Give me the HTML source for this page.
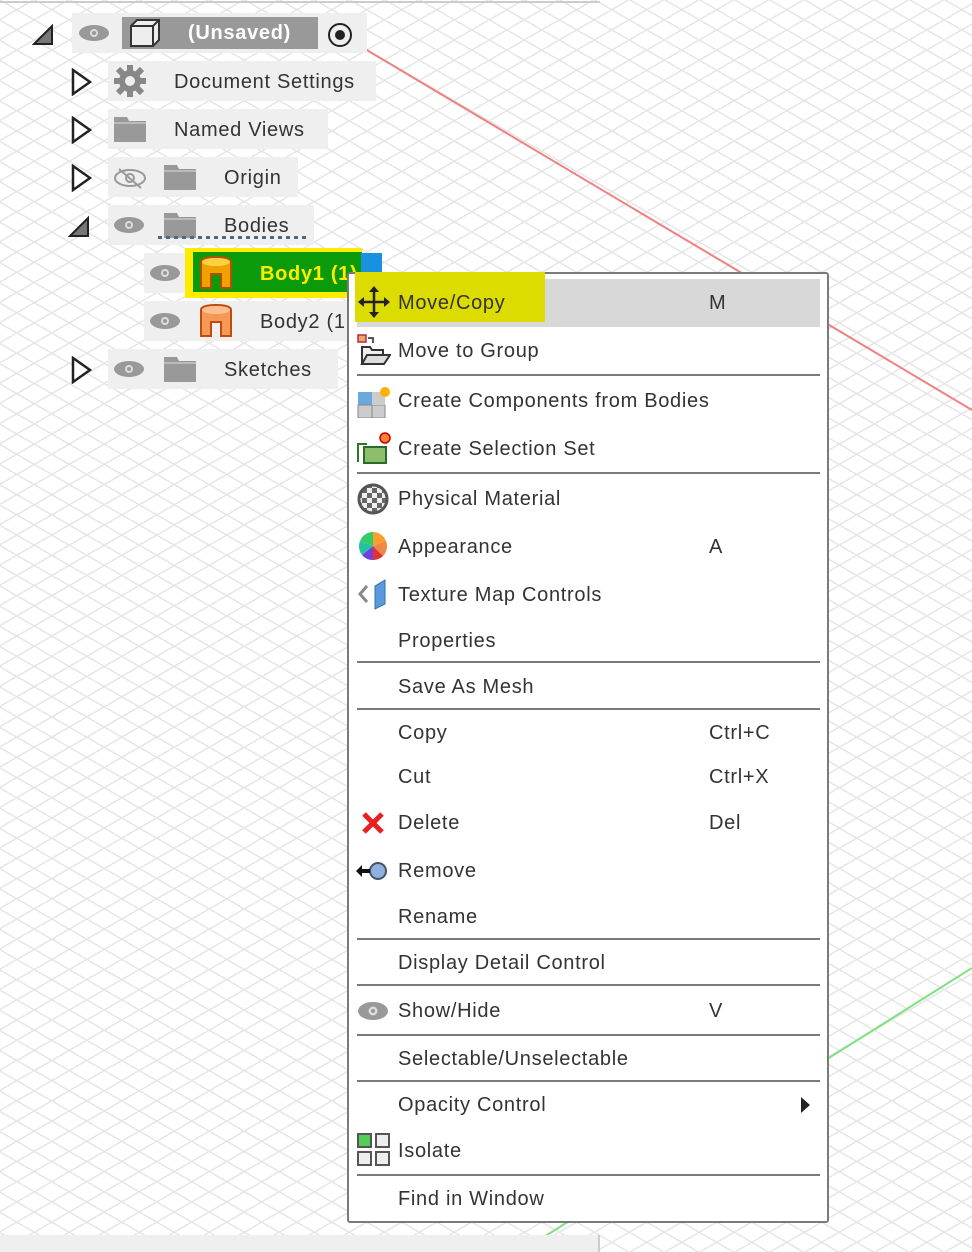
<!DOCTYPE html>
<html><head><meta charset="utf-8"><style>
*{margin:0;padding:0;box-sizing:border-box}
body{width:972px;height:1252px;overflow:hidden;position:relative;background:#fff;font-family:"Liberation Sans",sans-serif;color:#333;letter-spacing:0.7px}
.bg{position:absolute;inset:0;background:
repeating-linear-gradient(30deg,transparent 0 16px,#e6e6e6 16px 17.5px),
repeating-linear-gradient(150deg,transparent 0 16px,#e6e6e6 16px 17.5px);}
.t{position:absolute;font-size:20px;line-height:24px;white-space:nowrap}
.rb{position:absolute;background:#efefef;height:40px}
.menu{position:absolute;left:347px;top:272px;width:482px;height:951px;background:#fff;border:2px solid #7a7a7a;border-radius:3px}
.sep{position:absolute;left:8px;width:463px;height:2px;background:#7a7a7a}
.mi{position:absolute;left:49px;font-size:20px;line-height:24px;color:#333;white-space:nowrap}
.sc{position:absolute;left:360px;font-size:20px;line-height:24px;color:#333}
.ic{position:absolute}
</style></head><body>
<div class="bg"></div>
<svg style="position:absolute;left:0;top:0" width="972" height="1252">
<line x1="350" y1="40" x2="972" y2="410" stroke="#f08080" stroke-width="2"/>
<line x1="520" y1="1252" x2="972" y2="968" stroke="#80e080" stroke-width="2"/>
<line x1="0" y1="2" x2="600" y2="2" stroke="#ccc" stroke-width="2"/>
</svg>
<!-- tree -->
<div class="rb" style="left:72px;top:13px;width:295px"></div>
<svg class="ic" style="left:32px;top:22px" width="24" height="24"><path d="M2 22L20 4V22Z" fill="#777" stroke="#222" stroke-width="2"/></svg>
<svg class="ic" style="left:78px;top:23px" width="32" height="20"><ellipse cx="16" cy="10" rx="15" ry="8" fill="#999"/><circle cx="16" cy="10" r="4" fill="#ddd"/><circle cx="16" cy="10" r="2" fill="#999"/></svg>
<div style="position:absolute;left:122px;top:17px;width:196px;height:32px;background:#999"></div>
<svg class="ic" style="left:127px;top:18px" width="34" height="30"><path d="M4 8L10 2H32V22L26 28H4Z" fill="#eee" stroke="#333" stroke-width="2"/><path d="M4 8H26V28M26 8L32 2" fill="none" stroke="#333" stroke-width="2"/></svg>
<div class="t" style="left:188px;top:21px;color:#fff;font-weight:bold">(Unsaved)</div>
<svg class="ic" style="left:326px;top:21px" width="28" height="28"><circle cx="14" cy="14" r="11" fill="none" stroke="#222" stroke-width="2"/><circle cx="14" cy="14" r="5" fill="#222"/></svg>

<div class="rb" style="left:108px;top:61px;width:268px"></div>
<svg class="ic" style="left:70px;top:68px" width="24" height="28"><path d="M3 2L20 14L3 26Z" fill="#fff" stroke="#222" stroke-width="2.5"/></svg>
<svg class="ic" style="left:113px;top:64px" width="34" height="34"><circle cx="17" cy="17" r="11" fill="#888"/><g stroke="#888" stroke-width="6"><line x1="17" y1="1" x2="17" y2="33"/><line x1="1" y1="17" x2="33" y2="17"/><line x1="5" y1="5" x2="29" y2="29"/><line x1="29" y1="5" x2="5" y2="29"/></g><circle cx="17" cy="17" r="5" fill="#efefef"/></svg>
<div class="t" style="left:174px;top:70px">Document Settings</div>

<div class="rb" style="left:108px;top:109px;width:220px"></div>
<svg class="ic" style="left:70px;top:116px" width="24" height="28"><path d="M3 2L20 14L3 26Z" fill="#fff" stroke="#222" stroke-width="2.5"/></svg>
<svg class="ic" style="left:113px;top:115px" width="34" height="28"><path d="M1 2H14L16 6H33V27H1Z" fill="#999"/><rect x="1" y="7" width="32" height="2" fill="#bbb"/></svg>
<div class="t" style="left:174px;top:118px">Named Views</div>

<div class="rb" style="left:108px;top:157px;width:190px"></div>
<svg class="ic" style="left:70px;top:164px" width="24" height="28"><path d="M3 2L20 14L3 26Z" fill="#fff" stroke="#222" stroke-width="2.5"/></svg>
<svg class="ic" style="left:113px;top:167px" width="34" height="22"><ellipse cx="17" cy="11" rx="15" ry="8" fill="none" stroke="#999" stroke-width="2"/><circle cx="17" cy="11" r="4" fill="none" stroke="#999" stroke-width="2"/><line x1="6" y1="2" x2="28" y2="21" stroke="#999" stroke-width="2"/></svg>
<svg class="ic" style="left:163px;top:163px" width="34" height="28"><path d="M1 2H14L16 6H33V27H1Z" fill="#999"/><rect x="1" y="7" width="32" height="2" fill="#bbb"/></svg>
<div class="t" style="left:224px;top:166px">Origin</div>

<div class="rb" style="left:108px;top:205px;width:206px"></div>
<svg class="ic" style="left:68px;top:214px" width="24" height="24"><path d="M2 22L20 4V22Z" fill="#777" stroke="#222" stroke-width="2"/></svg>
<svg class="ic" style="left:113px;top:215px" width="32" height="20"><ellipse cx="16" cy="10" rx="15" ry="8" fill="#999"/><circle cx="16" cy="10" r="4" fill="#ddd"/><circle cx="16" cy="10" r="2" fill="#999"/></svg>
<svg class="ic" style="left:163px;top:211px" width="34" height="28"><path d="M1 2H14L16 6H33V27H1Z" fill="#999"/><rect x="1" y="7" width="32" height="2" fill="#bbb"/></svg>
<div class="t" style="left:224px;top:214px">Bodies</div>
<div style="position:absolute;left:158px;top:236px;width:152px;height:3px;background:repeating-linear-gradient(90deg,#567 0 4px,transparent 4px 8px)"></div>

<div class="rb" style="left:144px;top:301px;width:210px"></div>
<div style="position:absolute;left:144px;top:253px;width:42px;height:40px;background:#efefef"></div>
<svg class="ic" style="left:149px;top:263px" width="32" height="20"><ellipse cx="16" cy="10" rx="15" ry="8" fill="#999"/><circle cx="16" cy="10" r="4" fill="#ddd"/><circle cx="16" cy="10" r="2" fill="#999"/></svg>
<div style="position:absolute;left:185px;top:248px;width:177px;height:50px;background:#ffeb00"></div>
<div style="position:absolute;left:193px;top:252px;width:169px;height:40px;background:#0a9a0a"></div>
<div style="position:absolute;left:361px;top:253px;width:21px;height:22px;background:#1a90e0"></div>
<svg class="ic" style="left:199px;top:256px" width="34" height="34"><path d="M2 6Q2 1 17 1Q32 1 32 6V32H22V18H12V32H2Z" fill="#f0a000" stroke="#b35000" stroke-width="2"/><ellipse cx="17" cy="6" rx="14" ry="4" fill="#ffd040"/></svg>
<div class="t" style="left:260px;top:262px;color:#ffeb00;font-weight:bold">Body1 (1)</div>
<svg class="ic" style="left:149px;top:311px" width="32" height="20"><ellipse cx="16" cy="10" rx="15" ry="8" fill="#999"/><circle cx="16" cy="10" r="4" fill="#ddd"/><circle cx="16" cy="10" r="2" fill="#999"/></svg>
<svg class="ic" style="left:199px;top:304px" width="34" height="34"><path d="M2 6Q2 1 17 1Q32 1 32 6V32H22V18H12V32H2Z" fill="#f59a55" stroke="#c04a10" stroke-width="2"/><ellipse cx="17" cy="6" rx="14" ry="4" fill="#fcc090"/></svg>
<div class="t" style="left:260px;top:310px">Body2 (1</div>

<div class="rb" style="left:108px;top:349px;width:230px"></div>
<svg class="ic" style="left:70px;top:356px" width="24" height="28"><path d="M3 2L20 14L3 26Z" fill="#fff" stroke="#222" stroke-width="2.5"/></svg>
<svg class="ic" style="left:113px;top:359px" width="32" height="20"><ellipse cx="16" cy="10" rx="15" ry="8" fill="#999"/><circle cx="16" cy="10" r="4" fill="#ddd"/><circle cx="16" cy="10" r="2" fill="#999"/></svg>
<svg class="ic" style="left:163px;top:355px" width="34" height="28"><path d="M1 2H14L16 6H33V27H1Z" fill="#999"/><rect x="1" y="7" width="32" height="2" fill="#bbb"/></svg>
<div class="t" style="left:224px;top:358px">Sketches</div>

<!-- bottom panel -->
<div style="position:absolute;left:0;top:1235px;width:600px;height:17px;background:#efefef;border-right:2px solid #ccc"></div>

<!-- menu -->
<div class="menu">
<div style="position:absolute;left:8px;top:5px;width:463px;height:48px;background:#d8d8d8"></div>
<div style="position:absolute;left:6px;top:-2px;width:190px;height:50px;background:#dcdc00"></div>
<div class="mi" style="top:17px">Move/Copy</div><div class="sc" style="top:17px">M</div>
<svg class="ic" style="left:9px;top:12px" width="32" height="32"><g stroke="#222" stroke-width="2.5"><line x1="16" y1="3" x2="16" y2="29"/><line x1="3" y1="16" x2="29" y2="16"/></g><g fill="#222"><path d="M16 0L11 6H21Z"/><path d="M16 32L11 26H21Z"/><path d="M0 16L6 11V21Z"/><path d="M32 16L26 11V21Z"/></g></svg>
<div class="mi" style="top:65px">Move to Group</div>
<svg class="ic" style="left:8px;top:60px" width="34" height="32"><rect x="1" y="1" width="8" height="7" fill="#f4a070" stroke="#a33" stroke-width="1.5"/><path d="M11 4H16V9" fill="none" stroke="#222" stroke-width="1.5"/><path d="M5 30V13H13L15 16H26V30Z" fill="#eee" stroke="#333" stroke-width="2"/><path d="M5 30L10 21H33L27 30Z" fill="#ddd" stroke="#333" stroke-width="2"/></svg>
<div class="sep" style="top:100px"></div>
<div class="mi" style="top:115px">Create Components from Bodies</div>
<svg class="ic" style="left:8px;top:110px" width="34" height="34"><rect x="1" y="8" width="14" height="13" fill="#6aa8e0"/><rect x="1" y="21" width="14" height="13" fill="#ccc" stroke="#888"/><rect x="15" y="21" width="13" height="13" fill="#ccc" stroke="#888"/><rect x="15" y="8" width="13" height="13" fill="#ccc"/><circle cx="28" cy="8" r="5" fill="#ffb000"/></svg>
<div class="mi" style="top:163px">Create Selection Set</div>
<svg class="ic" style="left:8px;top:158px" width="34" height="34"><path d="M1 30V12H10" fill="none" stroke="#2a7a2a" stroke-width="2"/><rect x="7" y="15" width="22" height="16" fill="#8bbd6a" stroke="#2a6a2a" stroke-width="2"/><circle cx="28" cy="6" r="5" fill="#ff8030" stroke="#c00" stroke-width="1.5"/></svg>
<div class="sep" style="top:198px"></div>
<div class="mi" style="top:213px">Physical Material</div>
<svg class="ic" style="left:8px;top:209px" width="32" height="32"><defs><pattern id="ch" width="10" height="10" patternUnits="userSpaceOnUse"><rect width="10" height="10" fill="#eee"/><rect width="5" height="5" fill="#666"/><rect x="5" y="5" width="5" height="5" fill="#666"/></pattern></defs><circle cx="16" cy="16" r="14" fill="url(#ch)" stroke="#555" stroke-width="3"/></svg>
<div class="mi" style="top:261px">Appearance</div><div class="sc" style="top:261px">A</div>
<svg class="ic" style="left:9px;top:257px" width="30" height="30"><path d="M15 15L15 1A14 14 0 0 1 28 10Z" fill="#f7a030"/><path d="M15 15L28 10A14 14 0 0 1 25 25Z" fill="#e84"/><path d="M15 15L25 25A14 14 0 0 1 15 29Z" fill="#d33"/><path d="M15 15L15 29A14 14 0 0 1 4 24Z" fill="#7040e0"/><path d="M15 15L4 24A14 14 0 0 1 2 10Z" fill="#28c0a0"/><path d="M15 15L2 10A14 14 0 0 1 15 1Z" fill="#3c6"/></svg>
<div class="mi" style="top:309px">Texture Map Controls</div>
<svg class="ic" style="left:8px;top:304px" width="32" height="32"><path d="M10 8L3 16L10 24" fill="none" stroke="#888" stroke-width="3"/><path d="M18 8L28 2V26L18 31Z" fill="#5a9ad8" stroke="#3070b0"/></svg>
<div class="mi" style="top:355px">Properties</div>
<div class="sep" style="top:387px"></div>
<div class="mi" style="top:401px">Save As Mesh</div>
<div class="sep" style="top:434px"></div>
<div class="mi" style="top:447px">Copy</div><div class="sc" style="top:447px">Ctrl+C</div>
<div class="mi" style="top:491px">Cut</div><div class="sc" style="top:491px">Ctrl+X</div>
<div class="mi" style="top:537px">Delete</div><div class="sc" style="top:537px">Del</div>
<svg class="ic" style="left:12px;top:537px" width="24" height="24"><path d="M3 3L21 21M21 3L3 21" stroke="#e82020" stroke-width="5"/></svg>
<div class="mi" style="top:585px">Remove</div>
<svg class="ic" style="left:6px;top:585px" width="34" height="24"><circle cx="23" cy="12" r="8" fill="#8fb0e0" stroke="#456" stroke-width="2"/><path d="M1 12L7 6V10H15V14H7V18Z" fill="#111"/></svg>
<div class="mi" style="top:631px">Rename</div>
<div class="sep" style="top:664px"></div>
<div class="mi" style="top:677px">Display Detail Control</div>
<div class="sep" style="top:710px"></div>
<div class="mi" style="top:725px">Show/Hide</div><div class="sc" style="top:725px">V</div>
<svg class="ic" style="left:8px;top:726px" width="32" height="22"><ellipse cx="16" cy="11" rx="15" ry="9" fill="#999"/><circle cx="16" cy="11" r="4.5" fill="#ddd"/><circle cx="16" cy="11" r="2" fill="#999"/></svg>
<div class="sep" style="top:760px"></div>
<div class="mi" style="top:773px">Selectable/Unselectable</div>
<div class="sep" style="top:806px"></div>
<div class="mi" style="top:819px">Opacity Control</div>
<svg class="ic" style="left:451px;top:821px" width="12" height="20"><path d="M1 2L10 10L1 18Z" fill="#222"/></svg>
<div class="mi" style="top:865px">Isolate</div>
<svg class="ic" style="left:8px;top:859px" width="34" height="34"><rect x="1" y="1" width="13" height="13" fill="#5c5" stroke="#555" stroke-width="2"/><rect x="19" y="1" width="13" height="13" fill="#eee" stroke="#555" stroke-width="2"/><rect x="1" y="19" width="13" height="13" fill="#eee" stroke="#555" stroke-width="2"/><rect x="19" y="19" width="13" height="13" fill="#eee" stroke="#555" stroke-width="2"/></svg>
<div class="sep" style="top:900px"></div>
<div class="mi" style="top:913px">Find in Window</div>
</div>
</body></html>
